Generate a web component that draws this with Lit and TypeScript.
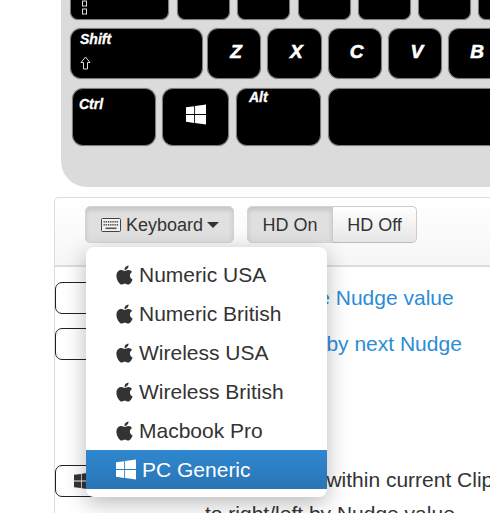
import { LitElement, TemplateResult, css, html, svg } from 'lit';
import { customElement } from 'lit/decorators.js';

const APPLE = 'M318.7 268.7c-.2-36.7 16.4-64.4 50-84.8-18.8-26.9-47.2-41.7-84.7-44.6-35.5-2.8-74.3 20.7-88.5 20.7-15 0-49.4-19.7-76.4-19.7C63.3 141.2 4 184.8 4 273.5q0 39.3 14.4 81.2c12.8 36.7 59 126.7 107.2 125.2 25.2-.6 43-17.9 75.8-17.9 31.8 0 48.3 17.9 76.4 17.9 48.6-.7 90.4-82.5 102.6-119.3-65.2-30.7-61.7-90-61.7-91.9zm-56.6-164.2c27.3-32.4 24.8-61.9 24-72.5-24.1 1.4-52 16.4-67.9 34.9-17.5 19.8-27.8 44.3-25.6 71.9 26.1 2 49.9-11.4 69.5-34.3z';
const WINDOWS = 'M0 93.7l183.6-25.3v177.4H0V93.7zm0 324.6l183.6 25.3V268.4H0v149.9zm202.8 28L448 480V268.4H202.8v177.9zm0-380.6v180.1H448V32L202.8 65.7z';

const appleIcon = (): TemplateResult => html`<svg class="ico-apple" viewBox="0 0 384 512"><path d=${APPLE} /></svg>`;
const windowsIcon = (cls: string): TemplateResult => html`<svg class=${cls} viewBox="0 0 448 512"><path d=${WINDOWS} /></svg>`;

const MENU = ['Numeric USA', 'Numeric British', 'Wireless USA', 'Wireless British', 'Macbook Pro'];

@customElement('app-root')
export class AppRoot extends LitElement {
  static styles = css`
    :host {
      display: block;
      position: relative;
      width: 490px;
      height: 513px;
      overflow: hidden;
      background: #fff;
      font-family: 'Liberation Sans', Arial, sans-serif;
      color: #333;
    }
    .keyboard {
      margin-left: 61px;
      width: 429px;
      height: 187px;
      box-sizing: border-box;
      padding-left: 9px;
      background: #dbdbdb;
      border-bottom-left-radius: 26px;
      overflow: hidden;
    }
    .row {
      display: flex;
      flex-wrap: nowrap;
    }
    .row-top {
      height: 20px;
      gap: 7.25px;
    }
    .row-mid {
      height: 51px;
      margin-top: 8px;
      gap: 6px;
    }
    .row-low {
      height: 58px;
      margin-top: 9px;
      margin-left: 2px;
      gap: 7px;
    }
    .key {
      position: relative;
      flex: none;
      box-sizing: border-box;
      background: #000;
      border: 1px solid #7c7c7c;
      border-radius: 11px;
      box-shadow: 0 0 1px #8a8a8a;
      color: #fff;
      font-weight: bold;
      font-style: italic;
      display: flex;
    }
    .row-top .key {
      width: 53px;
      border-top: none;
      border-radius: 0 0 8px 8px;
    }
    .row-top .key.caps {
      width: 99px;
      margin-right: 0.75px;
      padding-left: 11px;
    }
    .row-mid .key.letter {
      width: 54.25px;
      align-items: center;
      justify-content: center;
      padding: 0 0 3px 4px;
      font-size: 19px;
      -webkit-text-stroke: 0.6px #fff;
    }
    .key.named {
      flex-direction: column;
      font-size: 14px;
      padding: 3px 0 0 9px;
      line-height: 15px;
      -webkit-text-stroke: 0.3px #fff;
    }
    .key.shift {
      width: 133px;
      margin-right: -2px;
    }
    .key.ctrl {
      width: 84px;
      margin-right: -1px;
      padding-top: 8px;
      padding-left: 6px;
    }
    .key.win {
      width: 67px;
      align-items: center;
      justify-content: center;
      padding-bottom: 5px;
    }
    .key.alt {
      width: 85px;
      padding: 1px 0 0 12px;
    }
    .key.space {
      width: 200px;
    }
    .ico-arrow {
      width: 11px;
      height: 14px;
      margin-top: 9px;
      fill: none;
      stroke: #ddd;
      stroke-width: 1;
    }
    .ico-caps {
      width: 5px;
      height: 16px;
      fill: none;
      stroke: #ddd;
      stroke-width: 1;
    }
    .ico-keywin {
      width: 20px;
      height: 23px;
      fill: #fff;
    }
    .toolbar {
      display: flex;
      gap: 13px;
      box-sizing: border-box;
      margin: 10px -10px 0 54px;
      height: 70px;
      padding: 8px 0 0 30px;
      border: 1px solid #ddd;
      border-bottom-width: 2px;
      border-radius: 5px 0 0 0;
      background: linear-gradient(to bottom, #fff, #f6f6f6);
    }
    .dropdown {
      position: relative;
    }
    .btn {
      box-sizing: border-box;
      display: flex;
      align-items: center;
      height: 37px;
      padding-top: 1px;
      font-size: 18px;
      border: 1px solid #ccc;
      border-bottom-color: #bbb;
      background: linear-gradient(to bottom, #fff, #e6e6e6);
      color: #333;
    }
    .btn.active {
      background: #e0e0e0;
      border-color: #d4d4d4;
      box-shadow: inset 0 3px 5px rgba(0, 0, 0, 0.125);
    }
    .btn-keyboard {
      width: 149px;
      padding-left: 15px;
      border-radius: 5px;
    }
    .ico-keyboard {
      width: 20px;
      height: 14px;
      margin-right: 5px;
    }
    .caret {
      width: 0;
      height: 0;
      margin-left: 4px;
      border-top: 6px solid #333;
      border-left: 6px solid transparent;
      border-right: 6px solid transparent;
    }
    .group {
      display: flex;
    }
    .hd-on {
      width: 86px;
      justify-content: center;
      border-radius: 5px 0 0 5px;
    }
    .hd-off {
      width: 85px;
      margin-left: -1px;
      justify-content: center;
      border-radius: 0 5px 5px 0;
    }
    .menu {
      position: absolute;
      z-index: 2;
      top: 41px;
      left: 1px;
      width: 241px;
      box-sizing: border-box;
      padding: 8px 0;
      background: #fff;
      border-radius: 8px;
      box-shadow: 0 6px 22px rgba(0, 0, 0, 0.28);
    }
    .item {
      display: flex;
      align-items: center;
      height: 39px;
      padding-left: 30px;
      font-size: 21px;
      color: #333;
    }
    .item.selected {
      background: linear-gradient(to bottom, #2f87cf, #2a75b5);
      color: #fff;
    }
    .ico-apple {
      width: 17px;
      height: 22px;
      margin-right: 6px;
      fill: #333;
    }
    .ico-menuwin {
      width: 20px;
      height: 23px;
      margin-right: 6px;
      fill: #fff;
    }
    .shortcuts {
      margin-left: 54px;
      border-left: 1px solid #ddd;
      padding-top: 15px;
      height: 300px;
      box-sizing: border-box;
    }
    .shortcut {
      display: flex;
      gap: 14px;
      font-size: 21px;
      line-height: 32px;
      white-space: nowrap;
    }
    .shortcut + .shortcut {
      margin-top: 14px;
    }
    .shortcut.last {
      margin-top: 105px;
    }
    .two-line {
      margin-top: -2px;
      line-height: 34px;
    }
    .keycap {
      flex: none;
      box-sizing: border-box;
      display: flex;
      align-items: center;
      width: 136px;
      height: 32px;
      padding-left: 18px;
      border: 1px solid #222;
      border-radius: 7px;
      background: #fff;
    }
    .ico-capwin {
      width: 17px;
      height: 20px;
      fill: #333;
    }
    a {
      color: #2b8dd6;
      text-decoration: none;
    }
  `;

  private renderKeyboard(): TemplateResult {
    return html`
      <div class="keyboard">
        <div class="row row-top">
          <div class="key caps">
            <svg class="ico-caps" viewBox="0 0 5 16"><rect x="0.5" y="1" width="4" height="5" /><rect x="0.5" y="9" width="4" height="5" /></svg>
          </div>
          <div class="key"></div>
          <div class="key"></div>
          <div class="key"></div>
          <div class="key"></div>
          <div class="key"></div>
          <div class="key"></div>
        </div>
        <div class="row row-mid">
          <div class="key named shift">
            Shift
            <svg class="ico-arrow" viewBox="0 0 11 14"><path d="M5.5 1 L10 6.5 H7.5 V13 H3.5 V6.5 H1 Z" /></svg>
          </div>
          ${['Z', 'X', 'C', 'V', 'B'].map((k) => html`<div class="key letter">${k}</div>`)}
        </div>
        <div class="row row-low">
          <div class="key named ctrl">Ctrl</div>
          <div class="key win">${windowsIcon('ico-keywin')}</div>
          <div class="key named alt">Alt</div>
          <div class="key space"></div>
        </div>
      </div>
    `;
  }

  private renderKeyboardIcon(): TemplateResult {
    const cells = [];
    for (let i = 0; i < 7; i++) {
      cells.push(svg`<rect x=${2.5 + i * 2.2} y="3" width="1.4" height="1.6" fill="#555" />`);
      cells.push(svg`<rect x=${2.5 + i * 2.2} y="6" width="1.4" height="1.6" fill="#555" />`);
    }
    return html`
      <svg class="ico-keyboard" viewBox="0 0 20 14">
        <rect x="0.5" y="0.5" width="19" height="13" rx="1" fill="#f2f2f2" stroke="#444" />
        ${cells}
        <rect x="4.5" y="9.5" width="11" height="1.6" fill="#555" />
      </svg>
    `;
  }

  private renderMenu(): TemplateResult {
    return html`
      <div class="menu">
        ${MENU.map((m) => html`<div class="item">${appleIcon()}${m}</div>`)}
        <div class="item selected">${windowsIcon('ico-menuwin')}PC Generic</div>
      </div>
    `;
  }

  public render(): TemplateResult {
    return html`
      ${this.renderKeyboard()}
      <div class="toolbar">
        <div class="dropdown">
          <div class="btn active btn-keyboard">${this.renderKeyboardIcon()}Keyboard<span class="caret"></span></div>
          ${this.renderMenu()}
        </div>
        <div class="group">
          <div class="btn active hd-on">HD On</div>
          <div class="btn hd-off">HD Off</div>
        </div>
      </div>
      <div class="shortcuts">
        <div class="shortcut">
          <div class="keycap"></div>
          <div><a>Decrease the Nudge value</a></div>
        </div>
        <div class="shortcut">
          <div class="keycap"></div>
          <div><a>Change Clip by next Nudge</a></div>
        </div>
        <div class="shortcut last">
          <div class="keycap">${windowsIcon('ico-capwin')}</div>
          <div class="two-line">Move Image within current Clip<br />to right/left by Nudge value</div>
        </div>
      </div>
    `;
  }
}
